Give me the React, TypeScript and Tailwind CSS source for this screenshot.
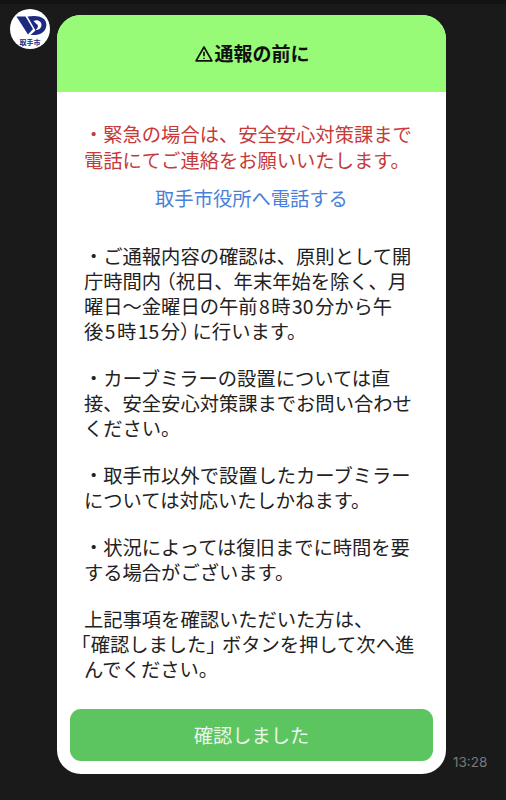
import type { ReactNode } from "react";

const jp = "font-['Noto_Sans_CJK_JP','Noto_Sans',sans-serif]";

const Logo = () => (
  <div className="relative h-10 w-10 shrink-0 rounded-full bg-white">
    <svg viewBox="0 0 40 40" className="absolute inset-0 h-10 w-10">
      <path d="M6.5 7.5 H15.5 L23 20 L18 25.5 Z" fill="#1c2a80" />
      <path
        d="M17.5 7.5 C23 6.5 31 6.3 34.5 10.5 C38 15 36.5 21.5 31 24.5 C28 26 24 26.3 20.5 26 L25.5 21.5 Z"
        fill="#1c2a80"
      />
      <path d="M23.5 12 C27.5 9.8 32 12.5 31.5 16.5 C31 19.8 28 21.3 25.5 21 C28 19.5 29 16 26.5 15 Z" fill="#ffffff" />
    </svg>
    <span className={`absolute bottom-[2px] left-0 w-full text-center text-[7px] leading-[9px] font-bold text-[#1c2a80] ${jp}`}>
      取手市
    </span>
  </div>
);

const WarningIcon = () => (
  <svg viewBox="0 0 20 20" className="h-[18px] w-[18px] shrink-0" fill="none" stroke="#111" strokeWidth="1.9" strokeLinejoin="round">
    <path d="M10 2.2 L18.8 17.6 H1.2 Z" />
    <path d="M10 7.5 V12.4" />
    <circle cx="10" cy="14.8" r="0.5" fill="#111" strokeWidth="0.9" />
  </svg>
);

// half-width brackets and spaced digits, like the phone's font does it
const Br = ({ children, className = "" }: { children: ReactNode; className?: string }) => (
  <span className={`inline-block [font-feature-settings:'halt'] ${className}`}>{children}</span>
);
const Num = ({ children }: { children: ReactNode }) => <span className="mx-[1.5px] inline-block">{children}</span>;

const paragraphs: ReactNode[][] = [
  [
    "・ご通報内容の確認は、原則として開",
    <>庁時間内<Br className="ml-[5px]">（</Br>祝日、年末年始を除く、月</>,
    <>曜日～金曜日の午前<Num>8</Num>時<Num>30</Num>分から午</>,
    <>後<Num>5</Num>時<Num>15</Num>分<Br className="mr-[3px]">）</Br>に行います。</>,
  ],
  ["・カーブミラーの設置については直", "接、安全安心対策課までお問い合わせ", "ください。"],
  ["・取手市以外で設置したカーブミラー", "については対応いたしかねます。"],
  ["・状況によっては復旧までに時間を要", "する場合がございます。"],
  [
    "上記事項を確認いただいた方は、",
    <><Br className="-ml-[3px]">「</Br>確認しました<Br className="mr-[6px]">」</Br>ボタンを押して次へ進</>,
    "んでください。",
  ],
];

export default function App() {
  return (
    <div className={`flex h-[800px] w-[506px] items-start overflow-hidden bg-[linear-gradient(#131313_0,#131313_4px,#1a1a1a_4px)] pt-[9px] pl-[10px] ${jp}`}>
      <Logo />
      <div className="mt-[6px] ml-[7px] flex h-[759px] w-[389px] shrink-0 flex-col overflow-hidden rounded-[24px] bg-white">
        <div className="flex h-[77px] shrink-0 items-center justify-center gap-px bg-[#98fb78] pl-[2px]">
          <WarningIcon />
          <span className="text-[19px] font-bold text-[#111]">通報の前に</span>
        </div>
        <div className="flex flex-1 flex-col pt-[29px] pl-[27px]">
          <p className="text-[19.3px] leading-[26px] whitespace-nowrap text-[#c53a3a]">
            ・緊急の場合は、安全安心対策課まで
            <br />
            電話にてご連絡をお願いいたします。
          </p>
          <p className="mt-[12px] pr-[27px] text-center text-[19.3px] leading-[26px] text-[#4a80d8]">取手市役所へ電話する</p>
          <div className="mt-[33px] flex flex-col gap-[22px]">
            {paragraphs.map((lines, p) => (
              <p key={p} className="text-[19.3px] leading-[25px] whitespace-nowrap text-[#222]">
                {lines.map((line, i) => (
                  <span key={i} className="block">
                    {line}
                  </span>
                ))}
              </p>
            ))}
          </div>
        </div>
        <button
          type="button"
          className="mx-[13px] mb-[13px] flex h-[52px] shrink-0 items-center justify-center rounded-[11px] bg-[#5cc55f] text-[19.3px] text-[#eaf7ea]"
        >
          確認しました
        </button>
      </div>
      <span className="mt-[745px] ml-[7px] font-['Inter',sans-serif] text-[13.5px] leading-[16px] text-[#77797a]">13:28</span>
    </div>
  );
}
